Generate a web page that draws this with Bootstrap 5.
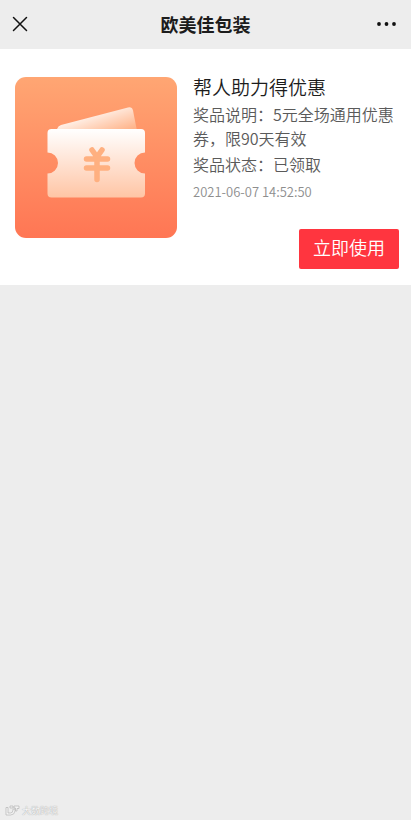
<!DOCTYPE html>
<html lang="zh-CN">
<head>
<meta charset="utf-8">
<meta name="viewport" content="width=device-width, initial-scale=1">
<title>欧美佳包装</title>
<link href="https://cdn.jsdelivr.net/npm/bootstrap@5.3.0/dist/css/bootstrap.min.css" rel="stylesheet">
<style>
  body { background: #ededed; color: #1c1c1c; font-family: "Noto Sans CJK SC", sans-serif; }
  .top-bar { height: 49px; padding: 0 12px 1px; background: #ededed; }
  .top-bar h1 { font-size: 18px; line-height: 24px; }
  .icon-btn { width: 24px; height: 24px; color: #111; }
  .prize { padding: 28px 12px 16px 15px; gap: 16px; }
  .cover { width: 162px; height: 161px; }
  .prize h2 { font-size: 19px; line-height: 20px; margin-bottom: 5px; font-weight: 350; }
  .detail { font-size: 16px; line-height: 24px; color: #5a5a5a; margin-bottom: 2px; font-weight: 350; }
  .prize time { font-size: 13px; line-height: 20px; margin-top: 4px; color: #8e8e8e; font-weight: 350; }
  .use-btn { margin-top: 27px; padding: 5px 14px 9px; font-size: 18px; line-height: 26px; font-weight: 350; color: #fff; background: #ff353f; border-radius: 2px; }
  .use-btn:hover { color: #fff; background: #e62c36; }
  .source { padding: 0 5px 3px; gap: 2px; font-size: 9px; line-height: 13px; color: #f6f6f6; text-shadow: 0 0 1px #888; }
</style>
<script src="https://cdn.jsdelivr.net/npm/bootstrap@5.3.0/dist/js/bootstrap.bundle.min.js"></script>
</head>
<body class="min-vh-100 d-flex flex-column">
<header class="top-bar d-flex align-items-center justify-content-between">
  <button type="button" class="icon-btn btn p-0 border-0 d-flex align-items-center" aria-label="关闭">
    <svg width="16" height="16" viewBox="0 0 16 16" fill="none" stroke="currentColor" stroke-width="1.5" stroke-linecap="round" aria-hidden="true"><path d="M1.500 1.500l13 13M14.500 1.500l-13 13"/></svg>
  </button>
  <h1 class="m-0 fw-bold">欧美佳包装</h1>
  <button type="button" class="icon-btn btn p-0 border-0 d-flex align-items-center justify-content-center" aria-label="更多">
    <svg width="20" height="4" viewBox="0 0 20 4" fill="currentColor" aria-hidden="true"><circle cx="2" cy="2" r="1.9"/><circle cx="9.500" cy="2" r="1.9"/><circle cx="17" cy="2" r="1.9"/></svg>
  </button>
</header>

<main class="flex-grow-1">
  <article class="prize bg-white d-flex align-items-start">
    <svg class="cover flex-shrink-0" viewBox="0 0 162 161" role="img" aria-label="优惠券">
      <defs>
        <linearGradient id="bg" x1="0" y1="0" x2="0" y2="1"><stop offset="0" stop-color="#ffa673"/><stop offset="1" stop-color="#ff7654"/></linearGradient>
        <linearGradient id="front" x1="0" y1="0" x2="0" y2="1"><stop offset="0" stop-color="#fff"/><stop offset="1" stop-color="#ffc5a5"/></linearGradient>
        <linearGradient id="back" gradientUnits="userSpaceOnUse" x1="90" y1="34" x2="98" y2="58"><stop offset="0" stop-color="#ffeee4"/><stop offset="1" stop-color="#ffb48a"/></linearGradient>
      </defs>
      <rect width="162" height="161" rx="11" fill="url(#bg)"/>
      <path d="M42 52Q43 49 46 48L113 30.500Q117 29.500 118 33.500L122 54H42Z" fill="url(#back)"/>
      <path d="M36.500 52H126Q130 52 130 56V75.500A10.500 10.500 0 0 0 130 96.500V116.500Q130 120.500 126 120.500H36.500Q32.500 120.500 32.500 116.500V96.500A10.500 10.500 0 0 0 32.500 75.500V56Q32.500 52 36.500 52Z" fill="url(#front)"/>
      <path d="M77 73L82 80L87 73M71.500 82H92.500M71.500 91H92.500M82 80V102.500" fill="none" stroke="#ffb080" stroke-width="5.500" stroke-linecap="round" stroke-linejoin="round"/>
    </svg>
    <div class="flex-grow-1 d-flex flex-column">
      <h2>帮人助力得优惠</h2>
      <p class="detail">奖品说明：5元全场通用优惠券，限90天有效</p>
      <p class="detail">奖品状态：已领取</p>
      <time datetime="2021-06-07T14:52:50">2021-06-07 14:52:50</time>
      <button type="button" class="use-btn btn border-0 align-self-end">立即使用</button>
    </div>
  </article>
</main>

<footer class="source d-flex align-items-center">
  <svg width="15" height="11" viewBox="0 0 15 11" fill="#f4f4f4" stroke="#b5b5b5" stroke-width=".7" aria-hidden="true"><path d="M1 2.500H3V8H5.500Q8 8 8 5V4H10V6Q9.500 10 5.500 10H1Z"/><path d="M5 1H8V3H5ZM9 1H14V3.500H12V6H10.500V3H9Z"/></svg>
  <span>大数跨境</span>
</footer>
</body>
</html>
